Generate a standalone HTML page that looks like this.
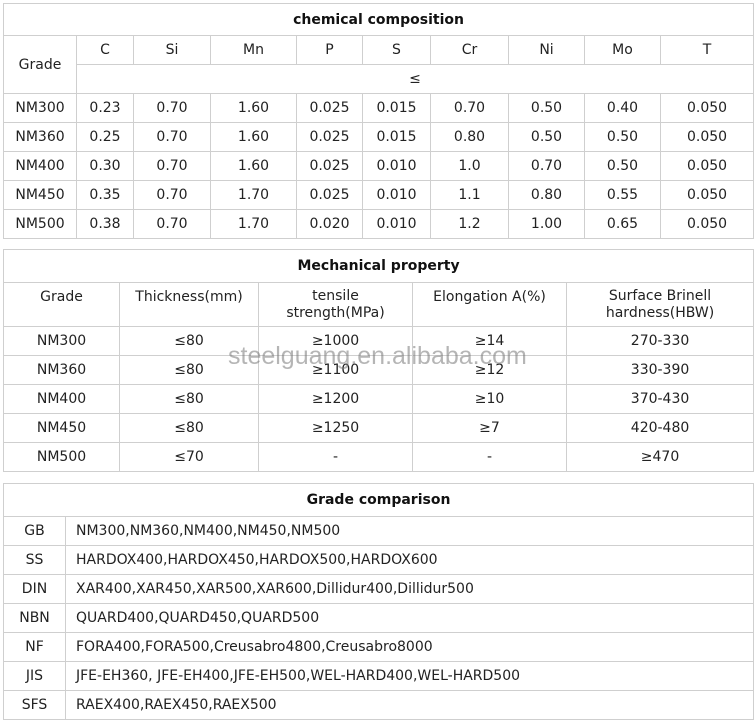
<!DOCTYPE html>
<html><head><meta charset="utf-8"><style>
body{margin:0;background:#fff;width:756px;height:723px;position:relative;overflow:hidden;font-family:"DejaVu Sans",Verdana,sans-serif;font-size:14px;color:#222}
table{position:absolute;left:3px;border-collapse:collapse;table-layout:fixed;width:750px}
td{border:1px solid #cfcfcf;text-align:center;padding:0;vertical-align:middle;overflow:hidden;white-space:nowrap}
td.t{font-weight:bold;color:#111}
td.l{text-align:left;padding-left:10px}
.wm{position:absolute;left:228px;top:342px;font-family:"Liberation Sans",Arial,sans-serif;font-size:25px;color:rgba(120,120,120,0.55)}
</style></head><body>
<table style="top:3px">
<colgroup><col style="width:73px"><col style="width:57px"><col style="width:77px"><col style="width:86px"><col style="width:66px"><col style="width:68px"><col style="width:78px"><col style="width:76px"><col style="width:76px"><col style="width:93px"></colgroup>
<tr style="height:32px"><td class="t" colspan="10">chemical composition</td></tr>
<tr style="height:29px"><td rowspan="2">Grade</td><td>C</td><td>Si</td><td>Mn</td><td>P</td><td>S</td><td>Cr</td><td>Ni</td><td>Mo</td><td>T</td></tr>
<tr style="height:29px"><td colspan="9">≤</td></tr>
<tr style="height:29px"><td>NM300</td><td>0.23</td><td>0.70</td><td>1.60</td><td>0.025</td><td>0.015</td><td>0.70</td><td>0.50</td><td>0.40</td><td>0.050</td></tr>
<tr style="height:29px"><td>NM360</td><td>0.25</td><td>0.70</td><td>1.60</td><td>0.025</td><td>0.015</td><td>0.80</td><td>0.50</td><td>0.50</td><td>0.050</td></tr>
<tr style="height:29px"><td>NM400</td><td>0.30</td><td>0.70</td><td>1.60</td><td>0.025</td><td>0.010</td><td>1.0</td><td>0.70</td><td>0.50</td><td>0.050</td></tr>
<tr style="height:29px"><td>NM450</td><td>0.35</td><td>0.70</td><td>1.70</td><td>0.025</td><td>0.010</td><td>1.1</td><td>0.80</td><td>0.55</td><td>0.050</td></tr>
<tr style="height:29px"><td>NM500</td><td>0.38</td><td>0.70</td><td>1.70</td><td>0.020</td><td>0.010</td><td>1.2</td><td>1.00</td><td>0.65</td><td>0.050</td></tr>
</table>
<table style="top:249px">
<colgroup><col style="width:116px"><col style="width:139px"><col style="width:154px"><col style="width:154px"><col style="width:187px"></colgroup>
<tr style="height:33px"><td class="t" colspan="5">Mechanical property</td></tr>
<tr style="height:44px"><td style="vertical-align:top;padding-top:6px">Grade</td><td style="vertical-align:top;padding-top:6px">Thickness(mm)</td><td style="line-height:17px">tensile<br>strength(MPa)</td><td style="vertical-align:top;padding-top:6px">Elongation A(%)</td><td style="line-height:17px">Surface Brinell<br>hardness(HBW)</td></tr>
<tr style="height:29px"><td>NM300</td><td>≤80</td><td>≥1000</td><td>≥14</td><td>270-330</td></tr>
<tr style="height:29px"><td>NM360</td><td>≤80</td><td>≥1100</td><td>≥12</td><td>330-390</td></tr>
<tr style="height:29px"><td>NM400</td><td>≤80</td><td>≥1200</td><td>≥10</td><td>370-430</td></tr>
<tr style="height:29px"><td>NM450</td><td>≤80</td><td>≥1250</td><td>≥7</td><td>420-480</td></tr>
<tr style="height:29px"><td>NM500</td><td>≤70</td><td>-</td><td>-</td><td>≥470</td></tr>
</table>
<table style="top:483px">
<colgroup><col style="width:62px"><col style="width:688px"></colgroup>
<tr style="height:33px"><td class="t" colspan="2">Grade comparison</td></tr>
<tr style="height:29px"><td>GB</td><td class="l">NM300,NM360,NM400,NM450,NM500</td></tr>
<tr style="height:29px"><td>SS</td><td class="l">HARDOX400,HARDOX450,HARDOX500,HARDOX600</td></tr>
<tr style="height:29px"><td>DIN</td><td class="l">XAR400,XAR450,XAR500,XAR600,Dillidur400,Dillidur500</td></tr>
<tr style="height:29px"><td>NBN</td><td class="l">QUARD400,QUARD450,QUARD500</td></tr>
<tr style="height:29px"><td>NF</td><td class="l">FORA400,FORA500,Creusabro4800,Creusabro8000</td></tr>
<tr style="height:29px"><td>JIS</td><td class="l">JFE-EH360, JFE-EH400,JFE-EH500,WEL-HARD400,WEL-HARD500</td></tr>
<tr style="height:29px"><td>SFS</td><td class="l">RAEX400,RAEX450,RAEX500</td></tr>
</table>
<div class="wm">steelguang.en.alibaba.com</div>
</body></html>
